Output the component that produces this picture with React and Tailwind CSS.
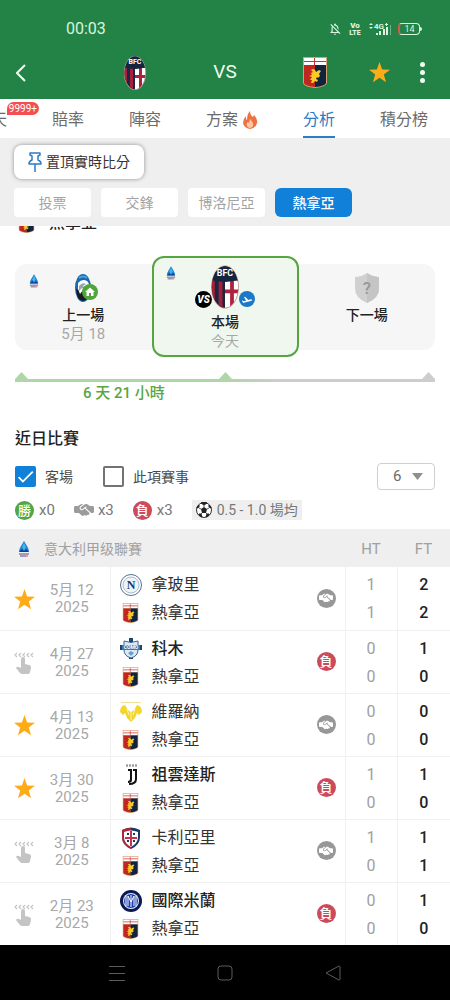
import React, { useState } from "react";
import { FaHandshakeSimple } from "react-icons/fa6";
import { MdHome, MdCheck, MdOutlineNotificationsOff } from "react-icons/md";

const matches = [
  { id: 1, starred: true, day: "5月 12", opponent: "拿玻里", crest: "napoli", result: "draw", ht: [1, 1], ft: [2, 2] },
  { id: 2, starred: false, day: "4月 27", opponent: "科木", crest: "como", result: "loss", ht: [0, 0], ft: [1, 0] },
  { id: 3, starred: true, day: "4月 13", opponent: "維羅納", crest: "verona", result: "draw", ht: [0, 0], ft: [0, 0] },
  { id: 4, starred: true, day: "3月 30", opponent: "祖雲達斯", crest: "juventus", result: "loss", ht: [1, 0], ft: [1, 0] },
  { id: 5, starred: false, day: "3月 8", opponent: "卡利亞里", crest: "cagliari", result: "draw", ht: [1, 0], ft: [1, 1] },
  { id: 6, starred: false, day: "2月 23", opponent: "國際米蘭", crest: "inter", result: "loss", ht: [0, 0], ft: [1, 0] },
];

const Genoa = ({ className }) => (
  <svg viewBox="0 0 24 31" className={className}>
    <path d="M0 0h24v26q-1 4-12 5Q1 30 0 26z" fill="#d9a06c" />
    <path d="M1 8h11v22Q2 29 1 26z" fill="#c0281f" />
    <path d="M12 8h11v18q-1 3-11 4z" fill="#10243f" />
    <path d="M1 1h22v7H1z" fill="#fff" />
    <path d="M1 4h22v1H1zM11 1h1v7h-1z" fill="#cf2f35" />
    <path
      d="M8 13l2-1 2 1 1 2 3-2 2 1-2 3 1 2-2 2-1-1-1 2 2 1-1 2-2-1-2 2H8l1-3-2 0 2-3-3-1 3-1-1-2 2-1z"
      fill="#fbc928"
    />
  </svg>
);

const Bologna = ({ className }) => (
  <svg viewBox="0 0 22 34" className={className}>
    <defs>
      <clipPath id="bologna-oval">
        <ellipse cx="11" cy="17" rx="10.400" ry="16.400" />
      </clipPath>
    </defs>
    <ellipse cx="11" cy="17" rx="11" ry="17" fill="#cfa9a0" />
    <g clipPath="url(#bologna-oval)">
      <path d="M0 0h22v34H0z" fill="#1b2740" />
      <path d="M0 12h3v22H0zM6 12h3v22H6z" fill="#a61f3c" />
      <path d="M11 12h11v22H11z" fill="#fff" />
      <path d="M15 12h3v22h-3zM11 19h11v3H11z" fill="#b0213f" />
      <path d="M0 0h22v11q-11 4-22 0z" fill="#15253f" />
    </g>
    <text x="11" y="8" textAnchor="middle" fontSize="7" fontWeight="700" fill="#fff">
      BFC
    </text>
  </svg>
);

const Atalanta = ({ className }) => (
  <svg viewBox="0 0 16 28" className={className}>
    <ellipse cx="8" cy="14" rx="8" ry="14" fill="#1d68ad" />
    <path d="M1 15q7 4 14 0-1 12-7 12T1 15z" fill="#191a20" />
    <path d="M3 9q4-5 9-2 3 3 2 7l-3 5-3-3-3 4-2-5z" fill="#fff" />
    <path d="M4 12q3-4 7-2l-3 2 2 3-3-1-3 3z" fill="#9aa5b0" />
    <path d="M4 4q4-3 8 0" fill="none" stroke="#4aa3dd" strokeWidth="2" />
  </svg>
);

const Napoli = () => (
  <svg viewBox="0 0 22 22" className="size-[22px]">
    <circle cx="11" cy="11" r="10.500" fill="#fff" stroke="#54708f" />
    <circle cx="11" cy="11" r="8" fill="#eef4f9" stroke="#a9bccd" />
    <text x="11" y="15" textAnchor="middle" fontSize="12" fontWeight="700" fill="#173a66" className="font-['Liberation_Serif',serif]">
      N
    </text>
  </svg>
);

const Como = () => (
  <svg viewBox="0 0 22 22" className="size-[22px]">
    <path d="M9 0h4v4H9zM0 7h4v5H0zM18 7h4v5h-4zM9 18h4v3H9z" fill="#1d4570" />
    <path d="M4 3q7 3 14 0v9q0 6-7 8-7-2-7-8z" fill="#dceaf5" stroke="#2d6699" />
    <path d="M2 7h18v5H2z" fill="#3e78ab" />
    <path d="M8 15l3-2 3 2-3 3z" fill="#6f9fc8" />
    <text x="11" y="11" textAnchor="middle" fontSize="5" fontWeight="700" fill="#fff">
      COMO
    </text>
  </svg>
);

const Verona = () => (
  <svg viewBox="0 0 22 22" className="size-[22px]">
    <path d="M1 1h20v1H1z" fill="#efe19a" />
    <path d="M0 11q0-6 5-7 2 4 4 6l2 1 2-1q2-2 4-6 5 1 5 7l-3 3-2-2-2 5-4 4-4-4-2-5-2 2z" fill="#f3d62b" />
    <path d="M11 11v8M7 8l2 6M15 8l-2 6" stroke="#fdf3a8" fill="none" />
  </svg>
);

const Juventus = () => (
  <svg viewBox="0 0 22 22" className="size-[22px]">
    <path d="M6 1h11M6 2h11" stroke="#777" strokeDasharray="2 1" />
    <path d="M8 5h4v11q0 3-4 3v-2q2 0 2-2V7H8z" fill="#111" />
    <path d="M13 5h4v10q0 6-8 6v-2q6 0 6-4V7h-2z" fill="#111" />
  </svg>
);

const Cagliari = () => (
  <svg viewBox="0 0 22 22" className="size-[22px]">
    <path d="M2 3q9-5 18 0v7q0 8-9 12Q2 18 2 10z" fill="#1b3766" />
    <path d="M2 3Q6 1 11 1v21Q2 18 2 10z" fill="#b2233e" />
    <path d="M4 5q7-3 14 0v5q0 6-7 10-7-4-7-10z" fill="#fff" />
    <path d="M10 4h2v15h-2zM5 10h12v2H5z" fill="#c63350" />
    <path d="M7 6h2v2H7zM13 6h2v2h-2zM7 13h2v2H7zM13 13h2v2h-2z" fill="#22375c" />
  </svg>
);

const Inter = () => (
  <svg viewBox="0 0 22 22" className="size-[22px]">
    <circle cx="11" cy="11" r="11" fill="#0b1a52" />
    <circle cx="11" cy="11" r="8" fill="#e8eefc" />
    <circle cx="11" cy="11" r="7" fill="#1c3fb0" />
    <path d="M6 6v10M16 6v10M8 16V6l3 6 3-6v10M11 5v12" stroke="#fff" fill="none" />
  </svg>
);

const crests = { napoli: Napoli, como: Como, verona: Verona, juventus: Juventus, cagliari: Cagliari, inter: Inter };

// Serie A mark
const LeagueIcon = ({ className }) => (
  <svg viewBox="0 0 12 16" className={className}>
    <path d="M6 0l3 5q2 3 2 6H1q0-3 2-6z" fill="#1b7fd2" />
    <path d="M6 1l2 5-2 4-2-4z" fill="#3fb4ea" />
    <path d="M1 11l3-3 2 2 2-2 3 3z" fill="#143f96" />
    <path d="M1 13h10M2 15h6" stroke="#4b4f82" />
    <path d="M8 15h2" stroke="#e5484d" />
  </svg>
);

const Star = ({ className }) => (
  <svg viewBox="0 0 24 24" className={className} fill="#ffab17">
    <path d="M12 0l3 8.500 9 .3-7.100 5.500 2.600 8.700L12 18l-7.500 5 2.600-8.700L0 8.800l9-.3z" />
  </svg>
);

const Swipe = () => (
  <svg viewBox="0 0 20 22" className="h-[22px] w-5 text-[#c4c4c4]">
    <path
      d="M3 1L1 3l2 2M7 1L5 3l2 2M11 1L9 3l2 2M15 1l-2 2 2 2M19 1l-2 2 2 2"
      fill="none"
      stroke="currentColor"
      strokeWidth="1.200"
    />
    <path
      d="M9 5q2 0 2 2v5l4 1q2 0 2 3l-1 4q0 2-2 2H8q-1 0-2-1l-4-5q1-2 3-1l2 1V7q0-2 2-2z"
      fill="currentColor"
    />
  </svg>
);

const Fire = () => (
  <svg viewBox="0 0 16 18" className="h-[18px] w-4">
    <path d="M8 0q0 4 3 6l1-2q4 4 3 8-1 5-7 6-6-1-7-6 0-4 3-7v3l1 1q0-6 3-9z" fill="#ee7143" />
    <path d="M8 8q4 4 3 7-1 2-3 2t-3-2q-1-3 1-4l1 1z" fill="#fbc7a0" />
  </svg>
);

const Ball = () => (
  <svg viewBox="0 0 16 16" className="size-4">
    <circle cx="8" cy="8" r="7.500" fill="#fff" stroke="#333" />
    <path d="M8 5l3 2-1 4H6L5 7z" fill="#222" />
    <path d="M5 1l3 2 3-2-3-1zM1 6l2-1V3L1 5zM15 6l-2-1V3l2 2zM3 12l2 0 1 3-3-2zM13 12h-2l-1 3 3-2z" fill="#222" stroke="#222" />
    <path d="M8 5V3M11 7l2-1M5 7L3 6M6 11l-1 1M10 11l1 1" stroke="#555" />
  </svg>
);

const Plane = () => (
  <svg viewBox="0 0 24 18" className="h-[9px] w-3" fill="currentColor">
    <path d="M22.070 9.640c-.21-.8-1.040-1.280-1.840-1.060L14.920 10l-6.900-6.430-1.930.51 4.140 7.170-4.970 1.330-1.970-1.540-1.450.39 1.820 3.160.77 1.330 1.600-.43 5.310-1.420 4.350-1.160L21 11.490c.81-.23 1.280-1.050 1.070-1.850z" />
  </svg>
);

const PinIcon = () => (
  <svg viewBox="0 0 14 20" className="h-5 w-3.5" fill="none" stroke="#2d7cc4" strokeWidth="1.500" strokeLinejoin="round">
    <path d="M2 1h10v2l-2 1v4q3 1 3 4H1q0-3 3-4V4L2 3zM7 12v8" />
  </svg>
);

const ResultBadge = ({ result }) =>
  result === "loss" ? (
    <span className="flex size-[19px] items-center justify-center rounded-full bg-[#cb4b5d] text-[13px] leading-none font-medium text-white">
      負
    </span>
  ) : (
    <span className="flex size-[19px] items-center justify-center rounded-full bg-[#979797] text-white">
      <FaHandshakeSimple className="size-3.5" />
    </span>
  );

const StatusBar = () => (
  <div className="flex h-[46px] items-end justify-between pr-[28px] pl-[66px] pb-1.5 text-[#d9f5df]">
    <span className="text-base leading-[22px]">00:03</span>
    <div className="flex h-[22px] items-center gap-1.5">
      <MdOutlineNotificationsOff className="size-3.5" />
      <svg viewBox="0 0 14 16" className="h-4 w-3.5" fill="currentColor" fontWeight="900">
        <text x="7" y="7" textAnchor="middle" fontSize="8">Vo</text>
        <text x="7" y="14" textAnchor="middle" fontSize="7">LTE</text>
      </svg>
      <svg viewBox="0 0 24 14" className="h-3.5 w-6" fill="currentColor">
        <path d="M3 1l2 2H1zM3 7L1 5h4z" />
        <text x="6" y="7" fontSize="8" fontWeight="700">4G</text>
        <path d="M17 2h3v1h-3zM18 1h1v3h-1zM8 11h2v2H8zM11 9h2v4h-2zM15 7h2v6h-2zM18 5h2v8h-2z" />
        <path d="M22 3h1v10h-1z" opacity=".4" />
      </svg>
      <div className="flex items-center">
        <span className="flex h-3 w-[22px] items-center justify-center rounded border border-l-2 border-current border-l-[#e0554a] text-[9px] leading-none">
          14
        </span>
        <span className="h-1 w-0.5 rounded-r bg-current" />
      </div>
    </div>
  </div>
);

const AppBar = () => (
  <div className="grid h-[53px] grid-cols-5 items-center text-[#eefbf0]">
    <button aria-label="返回" className="justify-self-start pl-4">
      <svg viewBox="0 0 10 18" className="h-[18px] w-2.5" fill="none" stroke="currentColor" strokeWidth="2">
        <path d="M9 1L1 9l8 8" />
      </svg>
    </button>
    <Bologna className="h-[34px] w-[22px] justify-self-center" />
    <span className="text-center text-[19px]">VS</span>
    <Genoa className="h-[31px] w-6 justify-self-center" />
    <div className="flex items-center justify-between pr-[25px] pl-[9px]">
      <button aria-label="收藏">
        <Star className="size-[21px]" />
      </button>
      <button aria-label="更多" className="flex flex-col gap-[3px]">
        <span className="size-[5px] rounded-full bg-current" />
        <span className="size-[5px] rounded-full bg-current" />
        <span className="size-[5px] rounded-full bg-current" />
      </button>
    </div>
  </div>
);

const tabs = ["聊天", "賠率", "陣容", "方案", "分析", "積分榜"];

const Tabs = ({ active, onChange }) => (
  <nav className="flex h-[39px] justify-end gap-[45px] overflow-hidden bg-white pr-[22px] text-base text-[#6b6b6b]">
    {tabs.map((tab) => (
      <button
        key={tab}
        onClick={() => onChange(tab)}
        className={
          tab === active
            ? "shrink-0 border-b-2 border-[#2d7cc4] pt-1 text-[#2d7cc4]"
            : "relative flex shrink-0 items-center gap-1 pt-0.5"
        }
      >
        {tab}
        {tab === "方案" && <Fire />}
        {tab === "聊天" && (
          <span className="absolute top-[3px] left-8 flex h-[13px] w-8 items-center justify-center rounded-full rounded-bl-none bg-[#f34f52] text-[10px] text-white">
            9999+
          </span>
        )}
      </button>
    ))}
  </nav>
);

const chips = ["投票", "交鋒", "博洛尼亞", "熱拿亞"];

const Toolbar = ({ active, onChange }) => (
  <div className="flex flex-col items-start gap-[9px] bg-[#efefef] px-3.5 pt-[7px] pb-[9px]">
    <button className="flex h-[34px] items-center gap-1 rounded-lg bg-white px-3.5 text-sm text-[#333] shadow-[0_0_4px_rgba(0,0,0,0.4)]">
      <PinIcon />
      置頂實時比分
    </button>
    <div className="flex gap-2.5">
      {chips.map((chip) => (
        <button
          key={chip}
          onClick={() => onChange(chip)}
          className={
            chip === active
              ? "h-[29px] w-[77px] rounded-md bg-[#1080d9] text-sm font-medium text-white"
              : "h-[29px] w-[77px] rounded-sm bg-white text-sm text-[#a3a3a3]"
          }
        >
          {chip}
        </button>
      ))}
    </div>
  </div>
);

const FixtureCards = () => (
  <div className="flex items-center px-[15px]">
    <div className="relative flex h-[86px] flex-1 flex-col items-center rounded-l-xl bg-[#f6f6f6] pt-2.5">
      <LeagueIcon className="absolute top-2.5 left-3.5 h-3.5 w-2.5" />
      <div className="relative">
        <Atalanta className="h-7 w-4" />
        <span className="absolute top-2.5 left-[7px] flex size-4 items-center justify-center rounded-full bg-[#4fa43a] text-white">
          <MdHome className="size-3" />
        </span>
      </div>
      <p className="mt-[3px] text-sm leading-5 font-medium text-[#222]">上一場</p>
      <p className="text-[15px] leading-[18px] text-[#a8a8a8]">5月 18</p>
    </div>
    <div className="relative flex h-[101px] w-[35%] flex-col items-center rounded-xl border-2 border-[#55a63f] bg-[#eff7ee] pt-[7px]">
      <LeagueIcon className="absolute top-2 left-3 h-3.5 w-2.5" />
      <div className="relative">
        <Bologna className="h-[44px] w-7" />
        <span className="absolute top-[26px] -left-4 flex size-[17px] items-center justify-center rounded-full bg-black text-[10px] font-black text-white italic">
          VS
        </span>
        <span className="absolute top-[26px] left-7 flex size-4 items-center justify-center rounded-full bg-[#1d78c8] text-white">
          <Plane />
        </span>
      </div>
      <p className="mt-[3px] text-sm leading-5 font-medium text-[#222]">本場</p>
      <p className="text-sm leading-[18px] text-[#a8a8a8]">今天</p>
    </div>
    <div className="flex h-[86px] flex-1 flex-col items-center rounded-r-xl bg-[#f6f6f6] pt-[9px]">
      <svg viewBox="0 0 24 30" className="h-[30px] w-6">
        <path d="M12 0q6 4 12 4v12q0 9-12 14Q0 25 0 16V4q6 0 12-4z" fill="#d0d0d0" />
        <path d="M12 0q6 4 12 4v12q0 9-12 14z" fill="#c5c5c5" />
        <text x="12" y="21" textAnchor="middle" fontSize="17" fontWeight="500" fill="#989898">
          ?
        </text>
      </svg>
      <p className="mt-0.5 text-sm leading-5 font-medium text-[#222]">下一場</p>
    </div>
  </div>
);

const Marker = ({ className }) => (
  <svg viewBox="0 0 13 7" className={className}>
    <path d="M6.500 0L13 7H0z" fill="currentColor" />
  </svg>
);

const Timeline = () => (
  <div className="px-[15px] pt-[15px]">
    <div className="flex justify-between">
      <Marker className="h-[7px] w-[13px] text-[#afd6a6]" />
      <Marker className="h-[7px] w-[13px] text-[#afd6a6]" />
      <Marker className="h-[7px] w-[13px] text-[#cdcdcd]" />
    </div>
    <div className="flex h-[3px]">
      <div className="flex-1 bg-[#afd6a6]" />
      <div className="flex-1 bg-linear-to-r from-[#afd6a6] to-[#cdcdcd] to-30%" />
    </div>
    <p className="w-1/2 pt-px pl-2 text-center text-[15px] leading-5 font-medium text-[#57a642]">6 天 21 小時</p>
  </div>
);

const Checkbox = ({ label, checked, onChange }) => (
  <label className="flex items-center gap-[9px] text-sm text-[#4a4a4a]">
    <span className="grid size-[21px]">
      <input
        type="checkbox"
        checked={checked}
        onChange={onChange}
        className="col-start-1 row-start-1 size-[21px] appearance-none rounded-xs border-2 border-[#737373] bg-white checked:border-[#1080d9] checked:bg-[#1080d9]"
      />
      {checked && <MdCheck className="pointer-events-none col-start-1 row-start-1 size-[21px] text-white" />}
    </span>
    {label}
  </label>
);

const RecentFilters = () => {
  const [away, setAway] = useState(true);
  const [sameLeague, setSameLeague] = useState(false);
  const [count, setCount] = useState("6");

  return (
    <section className="px-[15px] pt-[26px]">
      <h2 className="text-base leading-5 font-medium text-[#222]">近日比賽</h2>
      <div className="mt-3.5 flex items-center gap-[30px]">
        <Checkbox label="客場" checked={away} onChange={() => setAway(!away)} />
        <Checkbox label="此項賽事" checked={sameLeague} onChange={() => setSameLeague(!sameLeague)} />
        <div className="ml-auto grid items-center">
          <select
            aria-label="場數"
            value={count}
            onChange={(e) => setCount(e.target.value)}
            className="col-start-1 row-start-1 h-[27px] w-[58px] appearance-none rounded-sm border border-[#cfcfcf] bg-white pl-[15px] text-[15px] text-[#6b6b6b]"
          >
            <option value="6">6</option>
            <option value="10">10</option>
            <option value="20">20</option>
          </select>
          <svg viewBox="0 0 11 7" className="pointer-events-none col-start-1 row-start-1 mr-3 h-[7px] w-[11px] justify-self-end">
            <path d="M0 0h11L5.500 7z" fill="#8f8f8f" />
          </svg>
        </div>
      </div>
      <div className="mt-[10px] flex h-5 items-center gap-[19px] text-[15px] text-[#777]">
        <span className="flex items-center gap-[5px]">
          <span className="flex size-[19px] items-center justify-center rounded-full bg-[#54a640] text-[13px] leading-none font-medium text-white">
            勝
          </span>
          x0
        </span>
        <span className="flex items-center gap-1">
          <FaHandshakeSimple className="size-5 text-[#9b9b9b]" />
          x3
        </span>
        <span className="flex items-center gap-[5px]">
          <ResultBadge result="loss" />
          x3
        </span>
        <span className="flex h-5 items-center gap-[5px] bg-[#efefef] px-1 text-sm">
          <Ball />
          0.5 - 1.0 場均
        </span>
      </div>
    </section>
  );
};

const MatchRow = ({ match }) => {
  const Crest = crests[match.crest];
  const lost = match.result === "loss";

  return (
    <tr className="h-[63px] border-b border-[#f0f0f0] last:border-b-0">
      <td className="pt-0.5">
        <button aria-label="收藏" className="mx-auto flex">
          {match.starred ? <Star className="size-[21px]" /> : <Swipe />}
        </button>
      </td>
      <td className="border-r border-[#f0f0f0] pt-0.5 pr-3.5 text-center text-[15px] leading-[17px] whitespace-nowrap text-[#a8a8a8]">
        {match.day}
        <br />
        2025
      </td>
      <td className="pt-0.5 pl-[9px] text-base leading-[28px] text-[#333]">
        <div className={lost ? "flex items-center gap-2.5 font-medium text-[#222]" : "flex items-center gap-2.5"}>
          <Crest />
          {match.opponent}
        </div>
        <div className="flex items-center gap-2.5">
          <span className="flex w-[22px] justify-center">
            <Genoa className="h-5 w-[17px]" />
          </span>
          熱拿亞
        </div>
      </td>
      <td className="pr-[9px]">
        <div className="flex justify-end">
          <ResultBadge result={match.result} />
        </div>
      </td>
      <td className="border-x border-[#f0f0f0] pt-0.5 text-center text-base leading-[28px] text-[#a0a0a0]">
        <div>{match.ht[0]}</div>
        <div>{match.ht[1]}</div>
      </td>
      <td className="pt-0.5 text-center text-base leading-[28px] font-medium text-[#222]">
        <div>{match.ft[0]}</div>
        <div>{match.ft[1]}</div>
      </td>
    </tr>
  );
};

const MatchTable = () => (
  <table className="mt-[9px] w-full table-fixed border-collapse">
    <colgroup>
      <col className="w-12" />
      <col className="w-[62px]" />
      <col />
      <col className="w-[38px]" />
      <col className="w-[52px]" />
      <col className="w-[53px]" />
    </colgroup>
    <thead>
      <tr className="h-[38px] bg-[#efefef] text-[15px] text-[#a0a0a0]">
        <th colSpan={4} className="pt-0.5 text-left text-sm font-normal">
          <span className="flex items-center gap-3.5 pl-[18px]">
            <LeagueIcon className="h-4 w-3" />
            意大利甲级聯賽
          </span>
        </th>
        <th className="pt-0.5 font-normal">HT</th>
        <th className="pt-0.5 font-normal">FT</th>
      </tr>
    </thead>
    <tbody>
      {matches.map((match) => (
        <MatchRow key={match.id} match={match} />
      ))}
    </tbody>
  </table>
);

const SystemNav = () => (
  <footer className="mt-auto grid h-[55px] grid-cols-3 items-center justify-items-center bg-black px-[14%] text-[#5c5c5c]">
    <button aria-label="最近">
      <svg viewBox="0 0 16 16" className="size-4" fill="none" stroke="currentColor">
        <path d="M0 1.500h16M0 8.500h16M0 15.500h16" />
      </svg>
    </button>
    <button aria-label="主頁">
      <svg viewBox="0 0 16 16" className="size-4" fill="none" stroke="currentColor">
        <rect x="1" y="1" width="14" height="14" rx="3" />
      </svg>
    </button>
    <button aria-label="後退">
      <svg viewBox="0 0 16 16" className="size-4" fill="none" stroke="currentColor" strokeLinejoin="round">
        <path d="M1 8l13-7q1 0 1 1v12q0 1-1 1z" />
      </svg>
    </button>
  </footer>
);

const App = () => {
  const [tab, setTab] = useState("分析");
  const [chip, setChip] = useState("熱拿亞");

  return (
    <div className="flex min-h-screen flex-col bg-white font-['Roboto','Noto_Sans_CJK_TC',sans-serif]">
      <header className="bg-[#238347]">
        <StatusBar />
        <AppBar />
      </header>
      <Tabs active={tab} onChange={setTab} />
      <Toolbar active={chip} onChange={setChip} />
      {/* team heading, mostly scrolled under the toolbar */}
      <div className="flex h-[7px] items-end gap-3.5 overflow-hidden pl-[18px]">
        <Genoa className="h-5 w-[17px] shrink-0" />
        <h2 className="text-base leading-5 font-medium text-[#222]">熱拿亞</h2>
      </div>
      <main className="pt-[23px]">
        <FixtureCards />
        <Timeline />
        <RecentFilters />
        <MatchTable />
      </main>
      <SystemNav />
    </div>
  );
};

export default App;
